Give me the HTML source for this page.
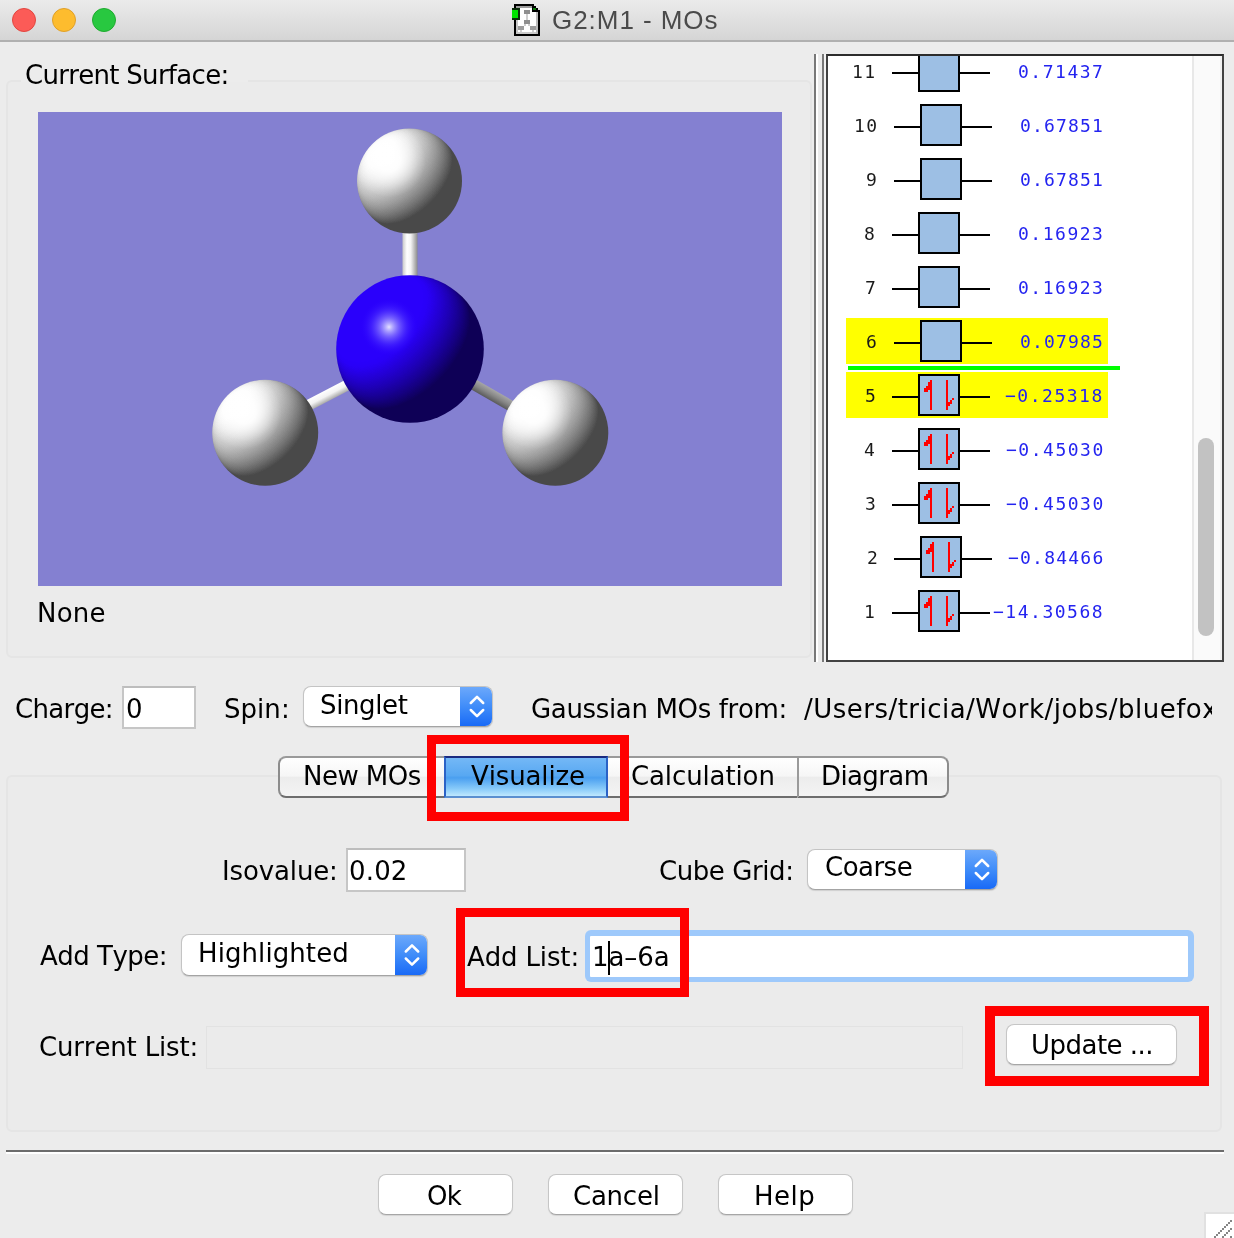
<!DOCTYPE html>
<html><head><meta charset="utf-8"><title>G2:M1 - MOs</title>
<style>
html,body{margin:0;padding:0;background:#ececec}
#app{position:relative;width:1234px;height:1238px;overflow:hidden;background:#ececec}
.t{will-change:transform;font-kerning:none !important;font-variant-ligatures:none !important}
.t{position:absolute;white-space:pre;margin:0;padding:0}
#titlebar{position:absolute;left:0;top:0;width:1234px;height:40px;background:linear-gradient(#ebebeb,#d5d5d5);border-bottom:2px solid #b0b0b0}
.tl{position:absolute;top:8px;width:22px;height:22px;border-radius:50%;border:1px solid #000}
.gbox{position:absolute;box-sizing:border-box;border:2px solid #e5e5e5;border-radius:6px;background:#ebebeb}
#view{position:absolute;left:38px;top:112px;width:744px;height:474px;background:#8480d1}
.vline{position:absolute;top:54px;width:2px;height:608px;background:#787878}
.vlineW{position:absolute;top:54px;width:2px;height:608px;background:#fff}
#mo{position:absolute;left:826px;top:54px;width:394px;height:604px;border:2px solid #424242;border-top-color:#2c2c2c;background:#fff;overflow:hidden}
#mo>*{position:absolute}
#mo{box-sizing:content-box}
.ln{height:2px;background:#000}
.bx{width:38px;height:38px;border:2px solid #000;background:#9dbfe4}
.gl{left:20px;top:310px;width:272px;height:4px;background:#00ff00}
#sbar{left:364px;top:0;width:30px;height:604px;background:#fafafa;border-left:2px solid #e8e8e8;border-right:2px solid #f1f1f1;box-sizing:border-box}
#thumb{position:absolute;left:4px;top:382px;width:16px;height:198px;border-radius:8px;background:#c2c2c2}
.field{position:absolute;box-sizing:border-box;border:2px solid #c6c6c6;border-top-color:#bdbdbd;background:#fff}
.pop{position:absolute;box-sizing:border-box;border-radius:8px;background:#fff;border:1.5px solid #c4c4c4;border-bottom-color:#a4a4a4;overflow:hidden;box-shadow:0 1px 1px rgba(0,0,0,0.12)}
.popb{position:absolute;right:-1.5px;top:-1.5px;bottom:-1.5px;width:34px;background:linear-gradient(#6eaafb,#3f8cf9 50%,#1566f6)}
.popb svg{position:absolute;left:0;top:0}
.btn{position:absolute;box-sizing:border-box;border-radius:8px;background:#fff;border:1.5px solid #c6c6c6;border-bottom-color:#a6a6a6;box-shadow:0 1px 1px rgba(0,0,0,0.10)}
.red{position:absolute;box-sizing:border-box;border:9px solid #ff0000}
#seg{position:absolute;left:278px;top:756px;width:671px;height:42px}
.sg{position:absolute;top:0;height:42px;box-sizing:border-box;border:2px solid #8c8c8c;border-top-color:#9a9a9a;border-bottom-color:#6e6e6e;border-left-width:0;border-right-width:0;background:linear-gradient(#ffffff 0%,#f6f6f6 48%,#ececec 50%,#f4f4f4 100%)}
.sg:first-child{border-left-width:2px}
.sg:last-child{border-right-width:2px}
.sg.sel{border:2px solid #2b62c6;border-top-color:#1a2a80;border-bottom-color:#5a8fd0;background:linear-gradient(#74b8f6 0%,#58a8f2 46%,#4a9ff0 52%,#86c9f9 80%,#bfe8fe 100%)}
#focus{position:absolute;left:584.5px;top:930px;width:609px;height:52px;box-sizing:border-box;border-radius:6px;background:#9ec9fb}
#focus>div{position:absolute;left:5.5px;top:5.5px;right:5.5px;bottom:5.5px;background:#fff;border-radius:1px}
.ar{position:absolute}
</style></head>
<body><div id="app">
<div id="titlebar"></div>
<div class="tl" style="left:12px;background:#fc5b57;border-color:#e2463f"></div>
<div class="tl" style="left:52px;background:#fdbc2e;border-color:#e0a028"></div>
<div class="tl" style="left:92px;background:#28c840;border-color:#1fab2f"></div>
<svg id="docicon" width="32" height="36" viewBox="510 2 32 36" style="position:absolute;left:510px;top:2px" shape-rendering="crispEdges">
<path d="M516 6 H534 L538 10 V34 H516 Z" fill="#fff"/>
<rect x="516" y="6" width="18" height="2" fill="#9c9c9c"/><rect x="516" y="8" width="2" height="26" fill="#c6c6c6"/>
<rect x="536" y="12" width="2" height="22" fill="#bcbcbc"/><rect x="518" y="32" width="18" height="2" fill="#cacaca"/>
<g fill="#000"><rect x="514" y="4" width="2" height="32"/><rect x="514" y="4" width="20" height="2"/><rect x="514" y="34" width="26" height="2"/><rect x="538" y="10" width="2" height="26"/>
<rect x="532" y="6" width="4" height="2"/><rect x="536" y="8" width="2" height="2"/><rect x="532" y="10" width="6" height="2"/><rect x="532" y="6" width="1" height="6"/></g>
<rect x="533" y="8" width="3" height="2" fill="#0a7c0a"/>
<rect x="512" y="8" width="8" height="12" fill="#0a2e0a"/><rect x="512" y="10" width="6" height="8" fill="#00e400"/>
<g fill="#8e8e8e"><rect x="524" y="10" width="6" height="4"/><rect x="524" y="20" width="6" height="4"/></g>
<g fill="#9c9c9c"><rect x="518" y="26" width="6" height="4"/><rect x="530" y="26" width="6" height="4"/></g>
<g fill="#cfcfcf"><rect x="526" y="14" width="2" height="6"/><rect x="524" y="24" width="2" height="2"/><rect x="528" y="24" width="2" height="2"/><rect x="520" y="30" width="2" height="2"/><rect x="532" y="30" width="2" height="2"/></g>
</svg>
<div class="t " style="left:551.89px;top:4.48px;font:26px/32px 'Liberation Sans','DejaVu Sans',sans-serif;letter-spacing:0.953px;color:#4a4a4a;">G2:M1 - MOs</div>
<div class="gbox" style="left:6px;top:80px;width:806px;height:578px"></div>
<div style="position:absolute;left:21px;top:78px;width:227px;height:4px;background:#ececec"></div>
<div class="t " style="left:25.34px;top:58.59px;font:26px/32px 'DejaVu Sans','Liberation Sans',sans-serif;letter-spacing:-0.704px;color:#000;">Current Surface:</div>
<div id="view"></div>
<svg id="mol" width="744" height="474" viewBox="38 112 744 474" style="position:absolute;left:38px;top:112px"><defs>
<linearGradient id="gLin"><stop offset="0" stop-color="#ff0000"/><stop offset="1" stop-color="#000000"/></linearGradient>
<radialGradient id="gRad"><stop offset="0" stop-color="rgb(0,255,0)"/><stop offset="0.15" stop-color="rgb(0,252,0)"/><stop offset="0.3" stop-color="rgb(0,243,0)"/><stop offset="0.4" stop-color="rgb(0,234,0)"/><stop offset="0.5" stop-color="rgb(0,221,0)"/><stop offset="0.6" stop-color="rgb(0,204,0)"/><stop offset="0.7" stop-color="rgb(0,182,0)"/><stop offset="0.78" stop-color="rgb(0,160,0)"/><stop offset="0.85" stop-color="rgb(0,134,0)"/><stop offset="0.9" stop-color="rgb(0,111,0)"/><stop offset="0.94" stop-color="rgb(0,87,0)"/><stop offset="0.97" stop-color="rgb(0,62,0)"/><stop offset="0.985" stop-color="rgb(0,44,0)"/><stop offset="0.995" stop-color="rgb(0,25,0)"/><stop offset="1" stop-color="rgb(0,0,0)"/></radialGradient>
<linearGradient id="lh1" href="#gLin" gradientUnits="userSpaceOnUse" x1="357.0" y1="128.5" x2="462.0" y2="233.5"/>
<radialGradient id="rh1" href="#gRad" gradientUnits="userSpaceOnUse" cx="409.5" cy="181" r="52.5"/>
<clipPath id="ch1"><circle cx="409.5" cy="181" r="52.5"/></clipPath>
<linearGradient id="ln" href="#gLin" gradientUnits="userSpaceOnUse" x1="336.2" y1="275.2" x2="483.8" y2="422.8"/>
<radialGradient id="rn" href="#gRad" gradientUnits="userSpaceOnUse" cx="410" cy="349" r="73.8"/>
<clipPath id="cn"><circle cx="410" cy="349" r="73.8"/></clipPath>
<linearGradient id="lh2" href="#gLin" gradientUnits="userSpaceOnUse" x1="212.2" y1="379.8" x2="318.2" y2="485.8"/>
<radialGradient id="rh2" href="#gRad" gradientUnits="userSpaceOnUse" cx="265.2" cy="432.8" r="53"/>
<clipPath id="ch2"><circle cx="265.2" cy="432.8" r="53"/></clipPath>
<linearGradient id="lh3" href="#gLin" gradientUnits="userSpaceOnUse" x1="502.29999999999995" y1="379.8" x2="608.3" y2="485.8"/>
<radialGradient id="rh3" href="#gRad" gradientUnits="userSpaceOnUse" cx="555.3" cy="432.8" r="53"/>
<clipPath id="ch3"><circle cx="555.3" cy="432.8" r="53"/></clipPath>
<filter id="fH" x="0" y="0" width="1" height="1" color-interpolation-filters="sRGB"><feColorMatrix type="matrix" values="1.1585 0.2868 0 0 -0.0792  1.1585 0.2868 0 0 -0.0792  1.1585 0.2868 0 0 -0.0792  0 0 0 1 0"/><feComponentTransfer><feFuncR type="table" tableValues="0.290 0.290 0.290 0.290 0.290 0.290 0.290 0.290 0.290 0.290 0.290 0.290 0.290 0.290 0.290 0.290 0.290 0.290 0.290 0.290 0.290 0.327 0.364 0.401 0.438 0.475 0.512 0.549 0.586 0.623 0.660 0.697 0.734 0.771 0.808 0.845 0.882 0.919 0.956 0.993 1.000"/><feFuncG type="table" tableValues="0.290 0.290 0.290 0.290 0.290 0.290 0.290 0.290 0.290 0.290 0.290 0.290 0.290 0.290 0.290 0.290 0.290 0.290 0.290 0.290 0.290 0.327 0.364 0.401 0.438 0.475 0.512 0.549 0.586 0.623 0.660 0.697 0.734 0.771 0.808 0.845 0.882 0.919 0.956 0.993 1.000"/><feFuncB type="table" tableValues="0.290 0.290 0.290 0.290 0.290 0.290 0.290 0.290 0.290 0.290 0.290 0.290 0.290 0.290 0.290 0.290 0.290 0.290 0.290 0.290 0.290 0.327 0.364 0.401 0.438 0.475 0.512 0.549 0.586 0.623 0.660 0.697 0.734 0.771 0.808 0.845 0.882 0.919 0.956 0.993 1.000"/></feComponentTransfer></filter>
<filter id="fN" x="0" y="0" width="1" height="1" color-interpolation-filters="sRGB"><feColorMatrix type="matrix" values="1.1585 0.2868 0 0 -0.0792  1.1585 0.2868 0 0 -0.0792  1.1585 0.2868 0 0 -0.0792  0 0 0 1 0"/><feComponentTransfer><feFuncR type="table" tableValues="0.057 0.057 0.057 0.057 0.057 0.057 0.057 0.057 0.057 0.057 0.057 0.057 0.057 0.057 0.057 0.057 0.057 0.057 0.057 0.057 0.057 0.065 0.073 0.081 0.089 0.097 0.105 0.114 0.122 0.130 0.138 0.146 0.154 0.162 0.165 0.165 0.165 0.165 0.165 0.165 0.165"/><feFuncG type="table" tableValues="0 0"/><feFuncB type="table" tableValues="0.340 0.340 0.340 0.340 0.340 0.340 0.340 0.340 0.340 0.340 0.340 0.340 0.340 0.340 0.340 0.340 0.340 0.340 0.340 0.340 0.340 0.388 0.436 0.485 0.533 0.581 0.629 0.678 0.726 0.774 0.822 0.871 0.919 0.967 0.985 0.985 0.985 0.985 0.985 0.985 0.985"/></feComponentTransfer></filter>
<radialGradient id="gSH" cx="0.5" cy="0.5" r="0.5">
<stop offset="0" stop-color="#fff" stop-opacity="1"/><stop offset="0.3" stop-color="#fff" stop-opacity="0.92"/><stop offset="0.55" stop-color="#fff" stop-opacity="0.55"/><stop offset="0.8" stop-color="#fff" stop-opacity="0.18"/><stop offset="1" stop-color="#fff" stop-opacity="0"/>
</radialGradient>
<radialGradient id="gS" cx="0.5" cy="0.5" r="0.5">
<stop offset="0" stop-color="#e4e0ff" stop-opacity="1"/><stop offset="0.12" stop-color="#bcb4ff" stop-opacity="0.95"/><stop offset="0.32" stop-color="#8a7aff" stop-opacity="0.8"/><stop offset="0.62" stop-color="#5238ff" stop-opacity="0.5"/><stop offset="1" stop-color="#2a00ff" stop-opacity="0"/>
</radialGradient>
<linearGradient id="gB1" x1="0" y1="0" x2="1" y2="0">
<stop offset="0" stop-color="#c8c8c8"/><stop offset="0.3" stop-color="#ffffff"/><stop offset="0.55" stop-color="#f4f4f4"/><stop offset="1" stop-color="#8c8c8c"/>
</linearGradient>
<linearGradient id="gB2" x1="0" y1="0" x2="0" y2="1">
<stop offset="0" stop-color="#ffffff"/><stop offset="0.5" stop-color="#f2f2f2"/><stop offset="1" stop-color="#a8a8a8"/>
</linearGradient>
<linearGradient id="gB3" x1="0" y1="0" x2="0" y2="1">
<stop offset="0" stop-color="#a6a6a6"/><stop offset="0.5" stop-color="#868686"/><stop offset="1" stop-color="#5a5a5a"/>
</linearGradient>
</defs>
<rect x="402.5" y="225" width="15" height="56" fill="url(#gB1)"/>
<g transform="translate(345.5,386) rotate(152.4)"><rect x="-3" y="-5.5" width="52" height="11" fill="url(#gB2)" transform="scale(1,-1)"/></g>
<g transform="translate(474.5,385) rotate(29.9)"><rect x="-3" y="-5.5" width="50" height="11" fill="url(#gB3)"/></g>
<g clip-path="url(#ch1)"><g filter="url(#fH)"><rect x="355.0" y="126.5" width="109.0" height="109.0" fill="url(#lh1)"/><rect x="355.0" y="126.5" width="109.0" height="109.0" fill="url(#rh1)" style="mix-blend-mode:screen"/></g><circle cx="389.0" cy="160.5" r="36.8" fill="url(#gSH)"/></g>
<g clip-path="url(#cn)"><g filter="url(#fN)"><rect x="334.2" y="273.2" width="151.6" height="151.6" fill="url(#ln)"/><rect x="334.2" y="273.2" width="151.6" height="151.6" fill="url(#rn)" style="mix-blend-mode:screen"/></g></g>
<circle cx="389" cy="327" r="29" fill="url(#gS)"/>
<g clip-path="url(#ch2)"><g filter="url(#fH)"><rect x="210.2" y="377.8" width="110" height="110" fill="url(#lh2)"/><rect x="210.2" y="377.8" width="110" height="110" fill="url(#rh2)" style="mix-blend-mode:screen"/></g><circle cx="244.5" cy="412.1" r="37.1" fill="url(#gSH)"/></g>
<g clip-path="url(#ch3)"><g filter="url(#fH)"><rect x="500.29999999999995" y="377.8" width="110" height="110" fill="url(#lh3)"/><rect x="500.29999999999995" y="377.8" width="110" height="110" fill="url(#rh3)" style="mix-blend-mode:screen"/></g><circle cx="534.6" cy="412.1" r="37.1" fill="url(#gSH)"/></g>
</svg>
<div class="t " style="left:36.85px;top:596.99px;font:26px/32px 'DejaVu Sans','Liberation Sans',sans-serif;letter-spacing:0.235px;color:#000;">None</div>
<div class="vline" style="left:814px"></div><div class="vlineW" style="left:816px"></div>
<div class="vline" style="left:822px"></div><div class="vlineW" style="left:824px;background:#f4f4f4"></div>
<div id="mo">
<div class="ln" style="left:64px;top:16px;width:98px"></div>
<div class="bx" style="left:90px;top:-6px"></div>
<div class="ln" style="left:66px;top:70px;width:98px"></div>
<div class="bx" style="left:92px;top:48px"></div>
<div class="ln" style="left:66px;top:124px;width:98px"></div>
<div class="bx" style="left:92px;top:102px"></div>
<div class="ln" style="left:64px;top:178px;width:98px"></div>
<div class="bx" style="left:90px;top:156px"></div>
<div class="ln" style="left:64px;top:232px;width:98px"></div>
<div class="bx" style="left:90px;top:210px"></div>
<div style="position:absolute;left:18px;top:262px;width:262px;height:46px;background:#ffff00"></div>
<div class="ln" style="left:66px;top:286px;width:98px"></div>
<div class="bx" style="left:92px;top:264px"></div>
<div style="position:absolute;left:18px;top:316px;width:262px;height:46px;background:#ffff00"></div>
<div class="ln" style="left:64px;top:340px;width:98px"></div>
<div class="bx" style="left:90px;top:318px"></div>
<svg class="ar" width="42" height="42" viewBox="0 0 42 42" shape-rendering="crispEdges" style="left:90px;top:318px">
<g fill="#ff0000"><rect x="12" y="6" width="2" height="30"/><rect x="10" y="8" width="2" height="8"/><rect x="8" y="12" width="2" height="6"/><rect x="6" y="14" width="2" height="4"/>
<rect x="28" y="6" width="2" height="30"/><rect x="30" y="28" width="2" height="4"/><rect x="32" y="26" width="2" height="4"/><rect x="34" y="24" width="2" height="2"/></g></svg>
<div class="ln" style="left:64px;top:394px;width:98px"></div>
<div class="bx" style="left:90px;top:372px"></div>
<svg class="ar" width="42" height="42" viewBox="0 0 42 42" shape-rendering="crispEdges" style="left:90px;top:372px">
<g fill="#ff0000"><rect x="12" y="6" width="2" height="30"/><rect x="10" y="8" width="2" height="8"/><rect x="8" y="12" width="2" height="6"/><rect x="6" y="14" width="2" height="4"/>
<rect x="28" y="6" width="2" height="30"/><rect x="30" y="28" width="2" height="4"/><rect x="32" y="26" width="2" height="4"/><rect x="34" y="24" width="2" height="2"/></g></svg>
<div class="ln" style="left:64px;top:448px;width:98px"></div>
<div class="bx" style="left:90px;top:426px"></div>
<svg class="ar" width="42" height="42" viewBox="0 0 42 42" shape-rendering="crispEdges" style="left:90px;top:426px">
<g fill="#ff0000"><rect x="12" y="6" width="2" height="30"/><rect x="10" y="8" width="2" height="8"/><rect x="8" y="12" width="2" height="6"/><rect x="6" y="14" width="2" height="4"/>
<rect x="28" y="6" width="2" height="30"/><rect x="30" y="28" width="2" height="4"/><rect x="32" y="26" width="2" height="4"/><rect x="34" y="24" width="2" height="2"/></g></svg>
<div class="ln" style="left:66px;top:502px;width:98px"></div>
<div class="bx" style="left:92px;top:480px"></div>
<svg class="ar" width="42" height="42" viewBox="0 0 42 42" shape-rendering="crispEdges" style="left:92px;top:480px">
<g fill="#ff0000"><rect x="12" y="6" width="2" height="30"/><rect x="10" y="8" width="2" height="8"/><rect x="8" y="12" width="2" height="6"/><rect x="6" y="14" width="2" height="4"/>
<rect x="28" y="6" width="2" height="30"/><rect x="30" y="28" width="2" height="4"/><rect x="32" y="26" width="2" height="4"/><rect x="34" y="24" width="2" height="2"/></g></svg>
<div class="ln" style="left:64px;top:556px;width:98px"></div>
<div class="bx" style="left:90px;top:534px"></div>
<svg class="ar" width="42" height="42" viewBox="0 0 42 42" shape-rendering="crispEdges" style="left:90px;top:534px">
<g fill="#ff0000"><rect x="12" y="6" width="2" height="30"/><rect x="10" y="8" width="2" height="8"/><rect x="8" y="12" width="2" height="6"/><rect x="6" y="14" width="2" height="4"/>
<rect x="28" y="6" width="2" height="30"/><rect x="30" y="28" width="2" height="4"/><rect x="32" y="26" width="2" height="4"/><rect x="34" y="24" width="2" height="2"/></g></svg>
<div class="gl"></div>
<div id="sbar"><div id="thumb"></div></div>
</div>
<div class="t mono" style="left:852.04px;top:60.96px;font:18px/22px 'DejaVu Sans Mono','Liberation Mono',monospace;letter-spacing:1.510px;color:#1a1a1a;">11</div>
<div class="t mono" style="left:1018.04px;top:60.96px;font:18px/22px 'DejaVu Sans Mono','Liberation Mono',monospace;letter-spacing:1.510px;color:#2424f0;">0.71437</div>
<div class="t mono" style="left:853.99px;top:114.96px;font:18px/22px 'DejaVu Sans Mono','Liberation Mono',monospace;letter-spacing:1.510px;color:#1a1a1a;">10</div>
<div class="t mono" style="left:1019.90px;top:114.96px;font:18px/22px 'DejaVu Sans Mono','Liberation Mono',monospace;letter-spacing:1.177px;color:#2424f0;">0.67851</div>
<div class="t mono" style="left:866.38px;top:168.96px;font:18px/22px 'DejaVu Sans Mono','Liberation Mono',monospace;letter-spacing:1.510px;color:#1a1a1a;">9</div>
<div class="t mono" style="left:1019.90px;top:168.96px;font:18px/22px 'DejaVu Sans Mono','Liberation Mono',monospace;letter-spacing:1.177px;color:#2424f0;">0.67851</div>
<div class="t mono" style="left:864.31px;top:222.96px;font:18px/22px 'DejaVu Sans Mono','Liberation Mono',monospace;letter-spacing:1.510px;color:#1a1a1a;">8</div>
<div class="t mono" style="left:1018.04px;top:222.96px;font:18px/22px 'DejaVu Sans Mono','Liberation Mono',monospace;letter-spacing:1.510px;color:#2424f0;">0.16923</div>
<div class="t mono" style="left:864.52px;top:276.96px;font:18px/22px 'DejaVu Sans Mono','Liberation Mono',monospace;letter-spacing:1.510px;color:#1a1a1a;">7</div>
<div class="t mono" style="left:1018.04px;top:276.96px;font:18px/22px 'DejaVu Sans Mono','Liberation Mono',monospace;letter-spacing:1.510px;color:#2424f0;">0.16923</div>
<div class="t mono" style="left:866.33px;top:330.96px;font:18px/22px 'DejaVu Sans Mono','Liberation Mono',monospace;letter-spacing:1.510px;color:#1a1a1a;">6</div>
<div class="t mono" style="left:1020.12px;top:330.96px;font:18px/22px 'DejaVu Sans Mono','Liberation Mono',monospace;letter-spacing:1.177px;color:#2424f0;">0.07985</div>
<div class="t mono" style="left:864.60px;top:384.96px;font:18px/22px 'DejaVu Sans Mono','Liberation Mono',monospace;letter-spacing:1.510px;color:#1a1a1a;">5</div>
<div class="t mono" style="left:1005.49px;top:384.96px;font:18px/22px 'DejaVu Sans Mono','Liberation Mono',monospace;letter-spacing:1.510px;color:#2424f0;">−0.25318</div>
<div class="t mono" style="left:864.02px;top:438.96px;font:18px/22px 'DejaVu Sans Mono','Liberation Mono',monospace;letter-spacing:1.510px;color:#1a1a1a;">4</div>
<div class="t mono" style="left:1005.50px;top:438.96px;font:18px/22px 'DejaVu Sans Mono','Liberation Mono',monospace;letter-spacing:1.510px;color:#2424f0;">−0.45030</div>
<div class="t mono" style="left:864.52px;top:492.96px;font:18px/22px 'DejaVu Sans Mono','Liberation Mono',monospace;letter-spacing:1.510px;color:#1a1a1a;">3</div>
<div class="t mono" style="left:1005.50px;top:492.96px;font:18px/22px 'DejaVu Sans Mono','Liberation Mono',monospace;letter-spacing:1.510px;color:#2424f0;">−0.45030</div>
<div class="t mono" style="left:866.69px;top:546.96px;font:18px/22px 'DejaVu Sans Mono','Liberation Mono',monospace;letter-spacing:1.510px;color:#1a1a1a;">2</div>
<div class="t mono" style="left:1007.50px;top:546.96px;font:18px/22px 'DejaVu Sans Mono','Liberation Mono',monospace;letter-spacing:1.224px;color:#2424f0;">−0.84466</div>
<div class="t mono" style="left:864.38px;top:600.96px;font:18px/22px 'DejaVu Sans Mono','Liberation Mono',monospace;letter-spacing:1.510px;color:#1a1a1a;">1</div>
<div class="t mono" style="left:993.14px;top:600.96px;font:18px/22px 'DejaVu Sans Mono','Liberation Mono',monospace;letter-spacing:1.510px;color:#2424f0;">−14.30568</div>
<div class="t " style="left:15.04px;top:692.99px;font:26px/32px 'DejaVu Sans','Liberation Sans',sans-serif;letter-spacing:-0.653px;color:#000;">Charge:</div>
<div class="field" style="left:122px;top:686px;width:74px;height:43px"></div>
<div class="t " style="left:125.89px;top:692.99px;font:26px/32px 'DejaVu Sans','Liberation Sans',sans-serif;letter-spacing:0.000px;color:#000;">0</div>
<div class="t " style="left:224.29px;top:692.99px;font:26px/32px 'DejaVu Sans','Liberation Sans',sans-serif;letter-spacing:0.045px;color:#000;">Spin:</div>
<div class="pop" style="left:303px;top:686px;width:190px;height:41px"><div class="popb"><svg width="34" height="41" viewBox="0 0 34 41"><path d="M10.8 17.0 L17 10.8 L23.2 17.0 M10.8 24.0 L17 30.2 L23.2 24.0" fill="none" stroke="#fff" stroke-width="2.5" stroke-linecap="round" stroke-linejoin="round"/></svg></div></div>
<div class="t " style="left:320.19px;top:688.99px;font:26px/32px 'DejaVu Sans','Liberation Sans',sans-serif;letter-spacing:-0.365px;color:#000;">Singlet</div>
<div class="t " style="left:530.84px;top:692.99px;font:26px/32px 'DejaVu Sans','Liberation Sans',sans-serif;letter-spacing:-0.347px;color:#000;">Gaussian MOs from:</div>
<div style="position:absolute;left:800px;top:690px;width:412px;height:40px;overflow:hidden">
<div class="t " style="left:4.40px;top:2.99px;font:26px/32px 'DejaVu Sans','Liberation Sans',sans-serif;letter-spacing:0.474px;color:#000;">/Users/tricia/Work/jobs/bluefox</div>
</div>
<div class="gbox" style="left:6px;top:775px;width:1216px;height:357px"></div>
<div id="seg">
<div class="sg" style="left:0;width:166px;border-radius:8px 0 0 8px"></div>
<div class="sg sel" style="left:166px;width:164px"></div>
<div class="sg" style="left:330px;width:189px;border-left:none"></div>
<div class="sg" style="left:519px;width:152px;border-radius:0 8px 8px 0;border-left:2px solid #9a9a9a"></div>
</div>
<div class="t " style="left:303.05px;top:759.99px;font:26px/32px 'DejaVu Sans','Liberation Sans',sans-serif;letter-spacing:-0.533px;color:#000;">New MOs</div>
<div class="t " style="left:470.80px;top:759.99px;font:26px/32px 'DejaVu Sans','Liberation Sans',sans-serif;letter-spacing:-0.134px;color:#000;">Visualize</div>
<div class="t " style="left:630.84px;top:759.99px;font:26px/32px 'DejaVu Sans','Liberation Sans',sans-serif;letter-spacing:-0.118px;color:#000;">Calculation</div>
<div class="t " style="left:820.75px;top:759.99px;font:26px/32px 'DejaVu Sans','Liberation Sans',sans-serif;letter-spacing:-0.612px;color:#000;">Diagram</div>
<div class="t " style="left:222.25px;top:855.39px;font:26px/32px 'DejaVu Sans','Liberation Sans',sans-serif;letter-spacing:-0.127px;color:#000;">Isovalue:</div>
<div class="field" style="left:346px;top:848px;width:120px;height:44px"></div>
<div class="t " style="left:349.09px;top:855.39px;font:26px/32px 'DejaVu Sans','Liberation Sans',sans-serif;letter-spacing:0.175px;color:#000;">0.02</div>
<div class="t " style="left:658.94px;top:855.39px;font:26px/32px 'DejaVu Sans','Liberation Sans',sans-serif;letter-spacing:-0.425px;color:#000;">Cube Grid:</div>
<div class="pop" style="left:807px;top:849px;width:191px;height:41px"><div class="popb"><svg width="34" height="41" viewBox="0 0 34 41"><path d="M10.8 17.0 L17 10.8 L23.2 17.0 M10.8 24.0 L17 30.2 L23.2 24.0" fill="none" stroke="#fff" stroke-width="2.5" stroke-linecap="round" stroke-linejoin="round"/></svg></div></div>
<div class="t " style="left:825.04px;top:850.99px;font:26px/32px 'DejaVu Sans','Liberation Sans',sans-serif;letter-spacing:-0.516px;color:#000;">Coarse</div>
<div class="t " style="left:40.20px;top:940.39px;font:26px/32px 'DejaVu Sans','Liberation Sans',sans-serif;letter-spacing:-0.506px;color:#000;">Add Type:</div>
<div class="pop" style="left:181px;top:934px;width:247px;height:42px"><div class="popb"><svg width="34" height="42" viewBox="0 0 34 42"><path d="M10.8 17.5 L17 11.3 L23.2 17.5 M10.8 24.5 L17 30.7 L23.2 24.5" fill="none" stroke="#fff" stroke-width="2.5" stroke-linecap="round" stroke-linejoin="round"/></svg></div></div>
<div class="t " style="left:198.45px;top:937.29px;font:26px/32px 'DejaVu Sans','Liberation Sans',sans-serif;letter-spacing:0.083px;color:#000;">Highlighted</div>
<div class="t " style="left:467.00px;top:940.59px;font:26px/32px 'DejaVu Sans','Liberation Sans',sans-serif;letter-spacing:-0.141px;color:#000;">Add List:</div>
<div id="focus"><div></div></div>
<div class="t " style="left:592.04px;top:940.59px;font:26px/32px 'DejaVu Sans','Liberation Sans',sans-serif;letter-spacing:-0.058px;color:#000;">1a–6a</div>
<div style="position:absolute;left:608px;top:941px;width:2px;height:34px;background:#000"></div>
<div class="t " style="left:38.74px;top:1031.19px;font:26px/32px 'DejaVu Sans','Liberation Sans',sans-serif;letter-spacing:-0.155px;color:#000;">Current List:</div>
<div style="position:absolute;left:206px;top:1026px;width:757px;height:43px;box-sizing:border-box;border:1.5px solid #e2e2e2;background:#ebebeb"></div>
<div class="btn" style="left:1006px;top:1024px;width:171px;height:41px"></div>
<div class="t " style="left:1031.14px;top:1029.39px;font:26px/32px 'DejaVu Sans','Liberation Sans',sans-serif;letter-spacing:-0.517px;color:#000;">Update ...</div>
<div class="red" style="left:427px;top:735px;width:202px;height:86px;border-width:9px"></div>
<div class="red" style="left:456px;top:908px;width:232.5px;height:88.5px;border-width:9.5px"></div>
<div class="red" style="left:985px;top:1006px;width:224px;height:80px;border-width:10px"></div>
<div style="position:absolute;left:6px;top:1150px;width:1218px;height:2px;background:#6c6c6c"></div><div style="position:absolute;left:6px;top:1152px;width:1218px;height:2px;background:#fff"></div>
<div class="btn" style="left:378px;top:1174px;width:135px;height:41px"></div>
<div class="btn" style="left:548px;top:1174px;width:135px;height:41px"></div>
<div class="btn" style="left:718px;top:1174px;width:135px;height:41px"></div>
<div class="t " style="left:427.24px;top:1179.59px;font:26px/32px 'DejaVu Sans','Liberation Sans',sans-serif;letter-spacing:-0.685px;color:#000;">Ok</div>
<div class="t " style="left:572.64px;top:1179.59px;font:26px/32px 'DejaVu Sans','Liberation Sans',sans-serif;letter-spacing:-0.237px;color:#000;">Cancel</div>
<div class="t " style="left:754.45px;top:1179.59px;font:26px/32px 'DejaVu Sans','Liberation Sans',sans-serif;letter-spacing:0.533px;color:#000;">Help</div>
<svg width="30" height="26" viewBox="0 0 30 26" style="position:absolute;left:1204px;top:1212px" shape-rendering="crispEdges">
<rect x="0" y="0" width="30" height="26" fill="#e1e1e1"/><rect x="2" y="2" width="28" height="24" fill="#fff"/>
<g fill="#858585"><rect x="26" y="8" width="2" height="2"/><rect x="24" y="10" width="2" height="2"/><rect x="22" y="12" width="2" height="2"/><rect x="20" y="14" width="2" height="2"/><rect x="18" y="16" width="2" height="2"/><rect x="16" y="18" width="2" height="2"/><rect x="14" y="20" width="2" height="2"/><rect x="12" y="22" width="2" height="2"/><rect x="10" y="24" width="2" height="2"/><rect x="26" y="16" width="2" height="2"/><rect x="24" y="18" width="2" height="2"/><rect x="22" y="20" width="2" height="2"/><rect x="20" y="22" width="2" height="2"/><rect x="18" y="24" width="2" height="2"/><rect x="26" y="24" width="2" height="2"/></g></svg>
</div></body></html>
